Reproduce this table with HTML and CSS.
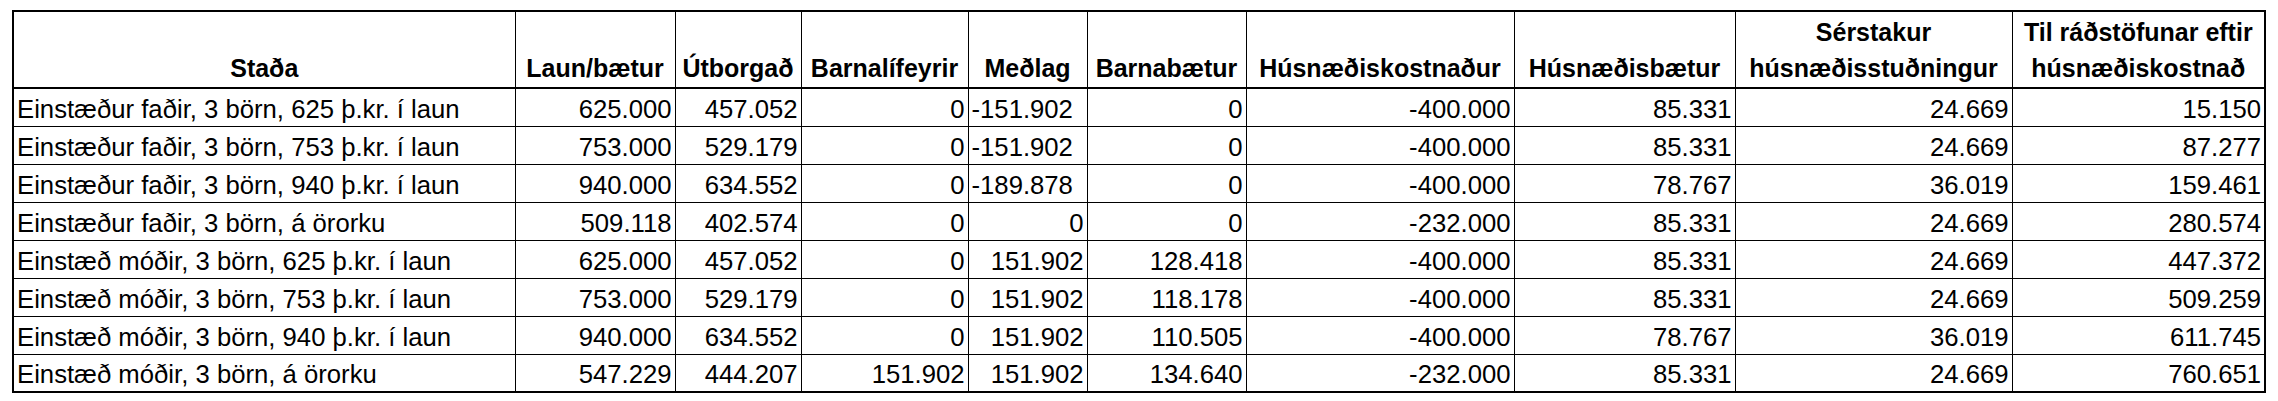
FILE: index.html
```html
<!DOCTYPE html>
<html lang="is">
<head>
<meta charset="utf-8">
<title>Staða</title>
<link rel="stylesheet" href="styles.css">
</head>
<body>
<table class="sheet">
  <colgroup>
    <col class="c-stada">
    <col class="c-laun">
    <col class="c-utb">
    <col class="c-barnal">
    <col class="c-medlag">
    <col class="c-barnab">
    <col class="c-hkostn">
    <col class="c-hbaet">
    <col class="c-serst">
    <col class="c-til">
  </colgroup>
  <thead>
    <tr class="head">
      <th>Staða</th>
      <th>Laun/bætur</th>
      <th>Útborgað</th>
      <th>Barnalífeyrir</th>
      <th>Meðlag</th>
      <th>Barnabætur</th>
      <th>Húsnæðiskostnaður</th>
      <th>Húsnæðisbætur</th>
      <th>Sérstakur<br>húsnæðisstuðningur</th>
      <th>Til ráðstöfunar eftir<br>húsnæðiskostnað</th>
    </tr>
  </thead>
  <tbody>
    <tr><td class="txt">Einstæður faðir, 3 börn, 625 þ.kr. í laun</td><td>625.000</td><td>457.052</td><td>0</td><td class="left">-151.902</td><td>0</td><td>-400.000</td><td>85.331</td><td>24.669</td><td>15.150</td></tr>
    <tr><td class="txt">Einstæður faðir, 3 börn, 753 þ.kr. í laun</td><td>753.000</td><td>529.179</td><td>0</td><td class="left">-151.902</td><td>0</td><td>-400.000</td><td>85.331</td><td>24.669</td><td>87.277</td></tr>
    <tr><td class="txt">Einstæður faðir, 3 börn, 940 þ.kr. í laun</td><td>940.000</td><td>634.552</td><td>0</td><td class="left">-189.878</td><td>0</td><td>-400.000</td><td>78.767</td><td>36.019</td><td>159.461</td></tr>
    <tr><td class="txt">Einstæður faðir, 3 börn, á örorku</td><td>509.118</td><td>402.574</td><td>0</td><td>0</td><td>0</td><td>-232.000</td><td>85.331</td><td>24.669</td><td>280.574</td></tr>
    <tr><td class="txt">Einstæð móðir, 3 börn, 625 þ.kr. í laun</td><td>625.000</td><td>457.052</td><td>0</td><td>151.902</td><td>128.418</td><td>-400.000</td><td>85.331</td><td>24.669</td><td>447.372</td></tr>
    <tr><td class="txt">Einstæð móðir, 3 börn, 753 þ.kr. í laun</td><td>753.000</td><td>529.179</td><td>0</td><td>151.902</td><td>118.178</td><td>-400.000</td><td>85.331</td><td>24.669</td><td>509.259</td></tr>
    <tr><td class="txt">Einstæð móðir, 3 börn, 940 þ.kr. í laun</td><td>940.000</td><td>634.552</td><td>0</td><td>151.902</td><td>110.505</td><td>-400.000</td><td>78.767</td><td>36.019</td><td>611.745</td></tr>
    <tr><td class="txt">Einstæð móðir, 3 börn, á örorku</td><td>547.229</td><td>444.207</td><td>151.902</td><td>151.902</td><td>134.640</td><td>-232.000</td><td>85.331</td><td>24.669</td><td>760.651</td></tr>
  </tbody>
</table>
</body>
</html>
```

FILE: styles.css
```css
html, body {
  margin: 0;
  padding: 0;
  background: #ffffff;
}

body {
  font-family: "Liberation Sans", Arial, sans-serif;
  color: #000000;
}

.sheet {
  border-collapse: collapse;
  table-layout: fixed;
  width: 2252px;
  margin: 10px 0 0 12px;
  border: 2px solid #000;
}

.c-stada { width: 502px; }
.c-laun { width: 160px; }
.c-utb { width: 126px; }
.c-barnal { width: 167px; }
.c-medlag { width: 119px; }
.c-barnab { width: 159px; }
.c-hkostn { width: 268px; }
.c-hbaet { width: 221px; }
.c-serst { width: 277px; }
.c-til { width: 253px; }

.sheet th,
.sheet td {
  border: 1px solid #000;
  padding: 0 3px;
  white-space: nowrap;
  overflow: hidden;
}

.head th {
  height: 74px;
  font-weight: bold;
  font-size: 25px;
  line-height: 36px;
  text-align: center;
  vertical-align: bottom;
  border-bottom: 2px solid #000;
  padding-bottom: 1px;
}

.sheet td {
  height: 38px;
  box-sizing: border-box;
  font-size: 25.7px;
  line-height: 30px;
  text-align: right;
  vertical-align: middle;
  padding-top: 3px;
}

.sheet td.txt,
.sheet td.left {
  text-align: left;
}
```
